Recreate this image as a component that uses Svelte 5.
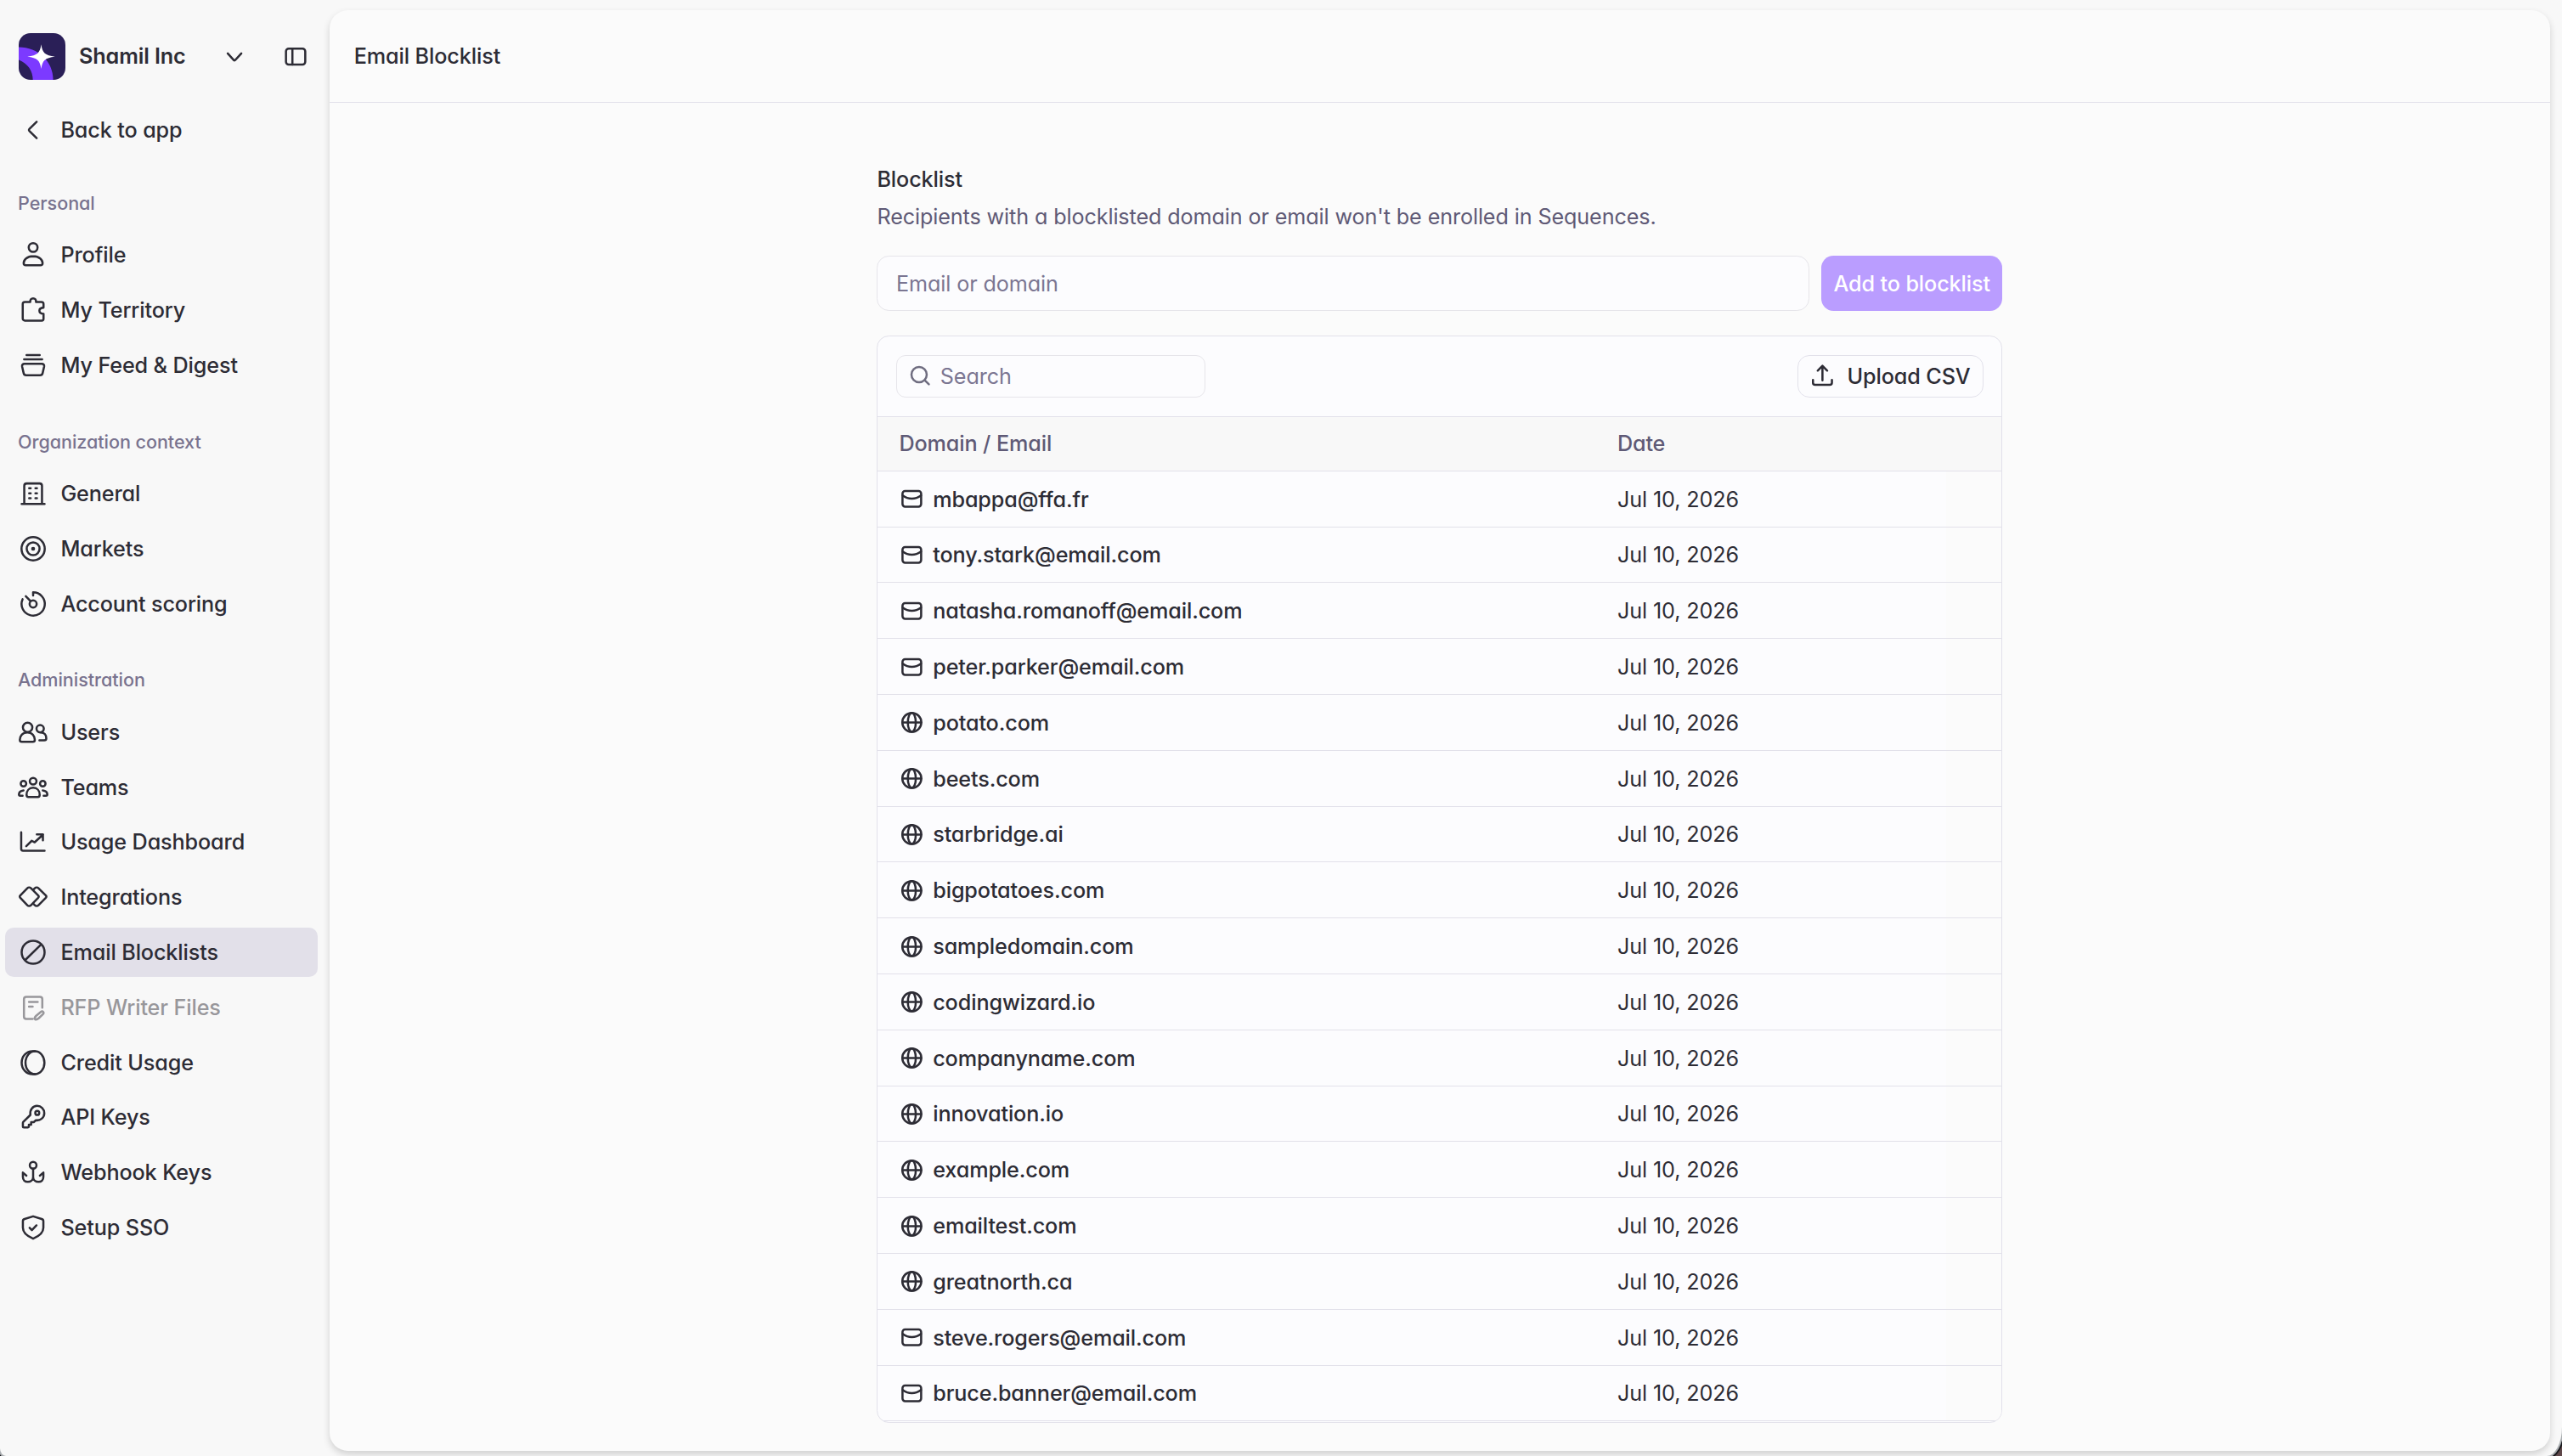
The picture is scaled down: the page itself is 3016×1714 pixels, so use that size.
<script>
    const icons = {
        back: '<path d="M12.3 4.6 7.5 9.4a.9.9 0 0 0 0 1.2l4.8 4.8"/>',
        profile: '<circle cx="10" cy="5.2" r="2.9"/><path d="M10 10.9c-4 0-6.2 2.4-6.2 4.5 0 .9.6 1.4 1.4 1.4h9.6c.8 0 1.4-.5 1.4-1.4 0-2.1-2.2-4.5-6.2-4.5z"/>',
        puzzle: '<path d="M4.6 4.7h3.5c-.1-1.5.7-2.4 1.9-2.4s2 .9 1.9 2.4h3.5c.8 0 1.4.6 1.4 1.4v2.3c-1.7.1-2.7.9-2.7 2s1 2 2.7 2.1v3.2c0 .7-.5 1.2-1.2 1.2h-11c-.8 0-1.4-.6-1.4-1.4V6.1c0-.8.6-1.4 1.4-1.4z"/>',
        stack: '<path d="M5.7 3.3h8.6M4.1 6.1h11.8M4.3 9h11.4c1 0 1.7.8 1.5 1.8l-1 4.4c-.2.8-.8 1.3-1.6 1.3H5.4c-.8 0-1.4-.5-1.6-1.3l-1-4.4C2.6 9.8 3.3 9 4.3 9z"/>',
        building: '<path d="M2.5 16.8h15M4.2 16.8V5c0-.9.7-1.6 1.6-1.6h8.4c.9 0 1.6.7 1.6 1.6v11.8M7.4 6.5h1M11.5 6.5h1M7.4 9.8h1M11.5 9.8h1M7.4 13.1h1M11.5 13.1h1"/>',
        target: '<circle cx="10" cy="10" r="7.6"/><circle cx="10" cy="10" r="4.2"/><circle cx="10" cy="10" r=".6" fill="currentColor"/>',
        score: '<path d="M10 4.5V2.4a7.6 7.6 0 1 1-6.9 4.5M5.2 4.9l3.1 3.2"/><circle cx="10" cy="10" r="2.3"/>',
        users: '<circle cx="6.4" cy="6.8" r="3.1"/><path d="M6.2 10.1c-3.100 0-4.900 2.200-4.900 4.900 0 .8.500 1.300 1.300 1.300h7.200c.8 0 1.300-.5 1.300-1.300 0-2.700-1.800-4.900-4.900-4.900z"/><circle cx="14.600" cy="7.700" r="2.400"/><path d="M15.200 10.200c2.200.1 3.400 1.700 3.400 3.800 0 .8-.5 1.300-1.300 1.300h-3.200"/>',
        teams: '<circle cx="10" cy="5.900" r="2.200"/><path d="M10 10.200c-2.700 0-4.300 2-4.300 4.700 0 .9.400 1.300 1.200 1.300h6.200c.8 0 1.200-.4 1.200-1.300 0-2.700-1.600-4.700-4.300-4.700z"/><circle cx="3.700" cy="7.500" r="1.800"/><circle cx="16.300" cy="7.500" r="1.800"/><path d="M3.700 11.900c-1.700.2-2.900 1.200-3 2.600 0 .6.300.9.900.9h1.500M16.300 11.900c1.700.2 2.900 1.200 3 2.600 0 .6-.3.900-.9.900h-1.500"/>',
        chart: '<path d="M2.200 3.700v10.900c0 .8.400 1.200 1.200 1.200h14.100M5.500 12.800l3.600-3.500 1.900 1 5.500-5M12.400 5.200h4v3.800"/>',
        integrations: '<path d="M8.600 4.200a1.700 1.700 0 0 0-2.400 0L1.600 9a1.100 1.100 0 0 0 0 1.500l4.600 4.800a1.700 1.700 0 0 0 2.400 0l4.700-4.800a1.100 1.100 0 0 0 0-1.500zM10.300 5l.8-.8a1.700 1.700 0 0 1 2.400 0L18.300 9a1.100 1.100 0 0 1 0 1.500l-4.800 4.800a1.700 1.700 0 0 1-2.400 0l-.8-.8"/>',
        block: '<circle cx="10" cy="10" r="7.5"/><path d="M4.900 15 15.200 4.900"/>',
        rfp: '<path d="M9.700 17.500H5.500c-.9 0-1.500-.7-1.500-1.500V4.600c0-.9.600-1.600 1.500-1.600h9c.9 0 1.500.7 1.500 1.600v5.500M7.300 6.400h5.700M7.300 9.500h2.400M15 12.900l-3 2.500c-.9.800-1.100 1.800-.7 2.400.7.200 1.500 0 2.300-.7l2.700-2.600c.6-.6.700-1.100.3-1.600s-1-.5-1.600 0z"/>',
        coin: '<ellipse cx="11.200" cy="10" rx="6.200" ry="7.500"/><path d="M11.200 2.500H9.600C5.600 2.500 2.500 5.800 2.500 10s3.100 7.500 7.100 7.500h1.600"/>',
        key: '<path d="M12.600 2.700a4.700 4.700 0 0 1 4.700 4.800c0 2.900-2.600 5-5.500 4.600l-1.400 1.200H8.700V15H7.200v1.300c0 .3-.3.500-.6.500H4c-.4 0-.7-.3-.7-.7v-2.200c0-.3.100-.6.300-.8l4.600-4.500C7.700 5.400 9.700 2.700 12.600 2.700z"/><circle cx="12.700" cy="7.300" r="1.300"/>',
        anchor: '<circle cx="10" cy="5.400" r="2.200"/><path d="M10 7.700v7.200M3.300 12.700v-2.500l2.300 2M16.700 12.700v-2.500l-2.300 2M3.300 10.500v2.600c0 1.900 1.300 3.200 3.200 3.200S9.900 15 10 13.200c.1 1.800 1.600 3.100 3.500 3.100s3.200-1.300 3.200-3.200v-2.600"/>',
        shield: '<path d="m10 2.700 5.600 1.700c.7.200 1.100.8 1.100 1.400v4.400c0 3.400-2.500 5.400-6.700 7.100-4.200-1.700-6.700-3.700-6.700-7.100V5.800c0-.7.400-1.200 1.100-1.400zM7.700 10.200l1.500 1.500 3-3.100"/>',
    }

    const groups = [
        {
            label: "Personal",
            items: [
                { icon: "profile", text: "Profile" },
                { icon: "puzzle", text: "My Territory" },
                { icon: "stack", text: "My Feed & Digest" },
            ],
        },
        {
            label: "Organization context",
            items: [
                { icon: "building", text: "General" },
                { icon: "target", text: "Markets" },
                { icon: "score", text: "Account scoring" },
            ],
        },
        {
            label: "Administration",
            items: [
                { icon: "users", text: "Users" },
                { icon: "teams", text: "Teams" },
                { icon: "chart", text: "Usage Dashboard" },
                { icon: "integrations", text: "Integrations" },
                { icon: "block", text: "Email Blocklists", active: true },
                { icon: "rfp", text: "RFP Writer Files", disabled: true },
                { icon: "coin", text: "Credit Usage" },
                { icon: "key", text: "API Keys" },
                { icon: "anchor", text: "Webhook Keys" },
                { icon: "shield", text: "Setup SSO" },
            ],
        },
    ]

    const entries = [
        "mbappa@ffa.fr",
        "tony.stark@email.com",
        "natasha.romanoff@email.com",
        "peter.parker@email.com",
        "potato.com",
        "beets.com",
        "starbridge.ai",
        "bigpotatoes.com",
        "sampledomain.com",
        "codingwizard.io",
        "companyname.com",
        "innovation.io",
        "example.com",
        "emailtest.com",
        "greatnorth.ca",
        "steve.rogers@email.com",
        "bruce.banner@email.com",
    ].map((value) => ({ value, date: "Jul 10, 2026" }))

    let newEntry = $state("")
    let search = $state("")

    let visible = $derived(entries.filter((e) => e.value.includes(search)))
</script>

<div class="app">
    <aside class="sidebar">
        <div class="workspace">
            <svg class="logo" viewBox="0 0 55 55">
                <defs>
                    <clipPath id="logo-clip"><rect width="55" height="55" rx="14" /></clipPath>
                </defs>
                <g clip-path="url(#logo-clip)">
                    <rect width="55" height="55" fill="#2a1f57" />
                    <path d="M0 16.6c23 0 40.6 17 40.6 38.4H16.700c0-10.500-6-19.500-16.700-23.500z" fill="#7c3aff" />
                    <path d="M26.5 13.3c1.400 10 4.400 13 16.300 14.400-11.900 1.400-14.900 4.400-16.300 14.400-1.400-10-4.400-13-16.300-14.400 11.900-1.400 14.900-4.400 16.300-14.400z" fill="#fff" />
                </g>
            </svg>
            <span class="name">Shamil Inc</span>
            <svg class="icon chevron" viewBox="0 0 20 20"><path d="m5.6 7.700 4 4.400a.6.6 0 0 0 .9 0l4-4.400" /></svg>
            <svg class="icon" viewBox="0 0 20 20"><rect x="3.700" y="4.600" width="12.600" height="10.400" rx="1.800" /><path d="M7.900 4.600v10.400" /></svg>
        </div>

        <a class="item back" href="#app">
            <svg class="icon" viewBox="0 0 20 20">{@html icons.back}</svg>
            Back to app
        </a>

        {#each groups as group}
            <nav class="group">
                <div class="label">{group.label}</div>
                {#each group.items as item}
                    <a class="item" class:active={item.active} class:disabled={item.disabled} href="#app">
                        <svg class="icon" viewBox="0 0 20 20">{@html icons[item.icon]}</svg>
                        {item.text}
                    </a>
                {/each}
            </nav>
        {/each}
    </aside>

    <main class="panel">
        <header class="topbar">Email Blocklist</header>

        <div class="content">
            <h1>Blocklist</h1>
            <p>Recipients with a blocklisted domain or email won't be enrolled in Sequences.</p>

            <div class="add-row">
                <input type="text" placeholder="Email or domain" bind:value={newEntry}>
                <button class="add">Add to blocklist</button>
            </div>

            <div class="card">
                <div class="toolbar">
                    <label class="search">
                        <svg class="icon" viewBox="0 0 16 16"><circle cx="7.200" cy="7.200" r="5" /><path d="m10.900 10.900 2.700 2.700" /></svg>
                        <input type="text" placeholder="Search" bind:value={search}>
                    </label>
                    <button class="upload">
                        <svg class="icon" viewBox="0 0 16 16"><path d="M8 11V1.800M4.900 4.600 8 1.500l3.100 3.100M1.800 10.700v1.800c0 .9.500 1.400 1.400 1.400h9.600c.9 0 1.400-.5 1.400-1.400v-1.800" /></svg>
                        Upload CSV
                    </button>
                </div>

                <div class="row head">
                    <div class="cell">Domain / Email</div>
                    <div class="cell">Date</div>
                </div>
                {#each visible as entry}
                    <div class="row">
                        <div class="cell value">
                            {#if entry.value.includes("@")}
                                <svg class="icon" viewBox="0 0 16 16"><rect x="1.900" y="2.800" width="12.200" height="10.200" rx="1.700" /><path d="M2 5.700c3.700 2.800 8.300 2.800 12 0" /></svg>
                            {:else}
                                <svg class="icon" viewBox="0 0 16 16"><circle cx="8" cy="8" r="6.200" /><ellipse cx="8" cy="8" rx="2.600" ry="6.200" /><path d="M1.900 8h12.200" /></svg>
                            {/if}
                            {entry.value}
                        </div>
                        <div class="cell">{entry.date}</div>
                        <div class="actions"></div>
                    </div>
                {/each}
            </div>
        </div>
    </main>
</div>

<style>
    /* 1rem = 16px at the 1.8 ui scale */
    :global(html) {
        font-size: 28.8px;
    }

    :global(body) {
        overflow: hidden;
        background: linear-gradient(90deg, #000 50%, #5f4749 50%);
    }

    .app {
        display: flex;
        box-sizing: border-box;
        height: 1714px;
        padding: 12px 14.4px 6px 0;
        overflow: hidden;
        background: #f8f8f8;
        border-radius: 0 0 18px 7px / 0 0 34px 9px;
        box-shadow: 0 0 0 2px #a9adb0, 0 0 0 4px #17181c;
        color: #2d2c35;
        font-family: Inter, sans-serif;
        font-feature-settings: "cv11";
        font-size: .875rem;
        letter-spacing: -.12px;
        line-height: 1.25rem;
    }

    .icon {
        flex: none;
        width: 1.25rem;
        height: 1.25rem;
        fill: none;
        stroke: currentColor;
        stroke-width: 1.4;
        stroke-linecap: round;
        stroke-linejoin: round;
    }

    .sidebar {
        flex: none;
        box-sizing: border-box;
        width: 388px;
        padding: 0 14px 0 6px;
    }

    .workspace {
        display: flex;
        align-items: center;
        box-sizing: border-box;
        height: 3.75rem;
        padding: 1px 8px 0 16px;
    }

    .logo {
        width: 55px;
        height: 55px;
    }

    .name {
        flex: 1;
        margin: -1px 0 0 16px;
        font-weight: 600;
    }

    .chevron {
        margin-right: 36px;
    }

    .item {
        display: flex;
        align-items: center;
        gap: .5rem;
        box-sizing: border-box;
        height: 2rem;
        margin-bottom: .25rem;
        padding-left: 15px;
        border-radius: 10px;
        color: inherit;
        font-weight: 500;
        text-decoration: none;
    }

    .back {
        margin-top: 4px;
    }

    .group {
        margin-top: 43.2px;
    }

    .group + .group {
        margin-top: 46.8px;
    }

    .label {
        margin-bottom: 18px;
        padding-left: 15px;
        color: #79738f;
        font-size: .75rem;
        font-weight: 500;
        letter-spacing: -.05px;
        line-height: 1rem;
    }

    .active {
        background: #e2e0e9;
    }

    .disabled {
        color: #98979b;
    }

    .panel {
        flex: 1;
        background: #fbfbfb;
        border-radius: .75rem;
        box-shadow: 0 4px 8px rgba(0, 0, 0, .16);
    }

    .topbar {
        display: flex;
        align-items: center;
        height: 3.75rem;
        padding-left: 1rem;
        border-bottom: 1px solid #e2e1ea;
        font-weight: 500;
    }

    .content {
        width: 46rem;
        margin: 0 auto;
        padding-top: 72px;
    }

    h1, p {
        margin: 0;
        font-size: inherit;
    }

    h1 {
        font-weight: 500;
    }

    p {
        margin-top: 8px;
        color: #5f5a76;
    }

    input, button {
        box-sizing: border-box;
        margin: 0;
        font: inherit;
        font-feature-settings: inherit;
        letter-spacing: inherit;
        color: inherit;
    }

    input::placeholder {
        color: #7b7692;
        opacity: 1;
    }

    .add-row {
        display: flex;
        gap: .5rem;
        margin-top: 28.4px;
    }

    .add-row input {
        flex: 1;
        height: 2.25rem;
        padding: 1px .75rem 0;
        background: #fcfcfe;
        border: 1px solid #e6e5ea;
        border-radius: .5rem;
    }

    .add {
        width: 213px;
        height: 2.25rem;
        padding: 1px 0 0;
        background: #ba9dff;
        border: 0;
        border-radius: .5rem;
        color: #fff;
        font-weight: 500;
    }

    .card {
        margin-top: 1rem;
        padding-bottom: 1px;
        overflow: hidden;
        background: #fcfcfe;
        border: 1px solid #e2e1ea;
        border-radius: .5rem;
    }

    .toolbar {
        display: flex;
        align-items: center;
        justify-content: space-between;
        padding: .75rem;
    }

    .search {
        display: flex;
        align-items: center;
        gap: 9px;
        box-sizing: border-box;
        width: 364px;
        height: 1.75rem;
        padding-left: 13px;
        border: 1px solid #e6e5ea;
        border-radius: 11px;
        color: #6f6d80;
    }

    .search input {
        min-width: 0;
        flex: 1;
        padding: 0;
        background: none;
        border: 0;
        outline: 0;
    }

    .toolbar .icon, .value .icon {
        width: 1rem;
        height: 1rem;
    }

    .upload {
        display: flex;
        align-items: center;
        gap: 15px;
        height: 1.75rem;
        padding: 0 14px;
        background: none;
        border: 1px solid #e2e1ea;
        border-radius: 14px;
        font-weight: 500;
    }

    .row {
        display: grid;
        grid-template-columns: 845.5px 1fr 2.25rem;
        height: 2.25rem;
        border-bottom: 1px solid #e2e1ea;
    }

    .head {
        height: 63.2px;
        background: #f8f8f8;
        border-top: 1px solid #e2e1ea;
        color: #5f5a76;
        font-weight: 500;
    }

    .cell {
        display: flex;
        align-items: center;
        padding: 1px 0 0 25px;
    }

    .head .cell {
        padding-top: 0;
    }

    .value {
        gap: 10px;
        padding-left: 26px;
        font-weight: 500;
    }

    .actions {
        background: #fbfbfb;
    }
</style>
